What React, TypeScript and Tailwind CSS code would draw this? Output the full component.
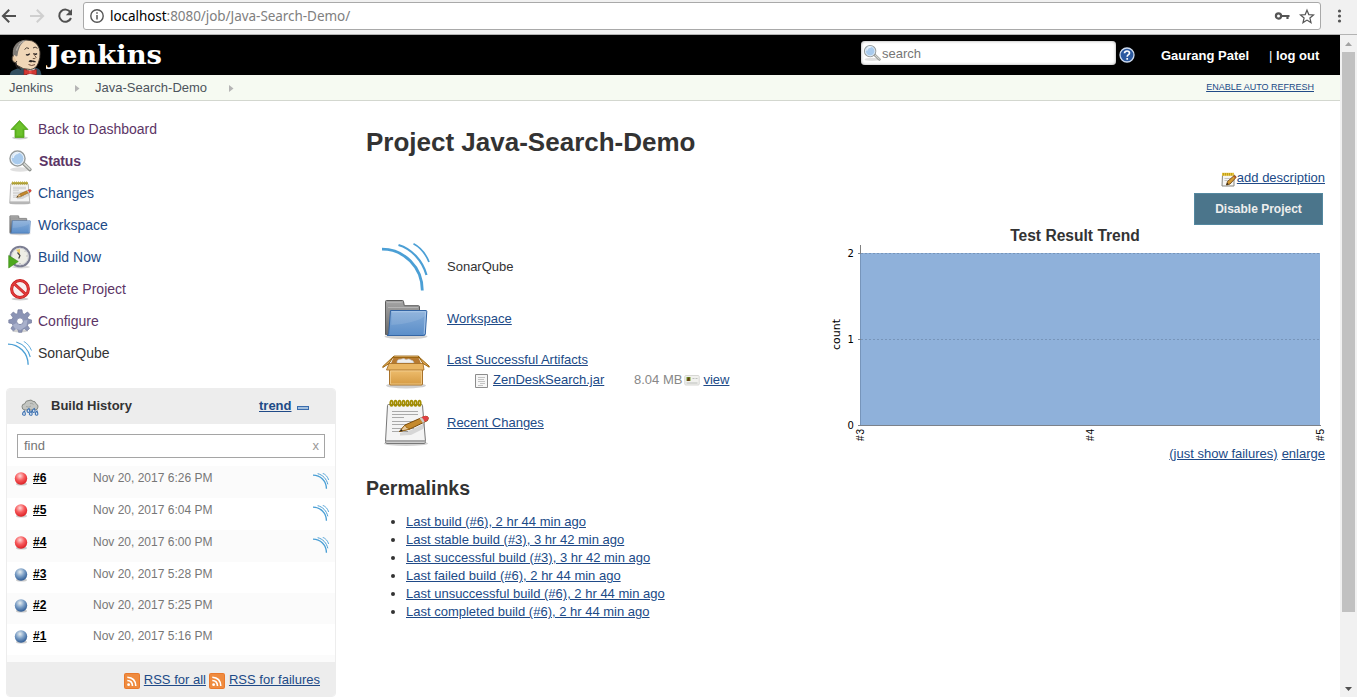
import React from 'react';

type IconProps = { className?: string };

const LINK = 'text-[#204a87] underline';

function SonarIcon({ className }: IconProps) {
  return (
    <svg className={className} viewBox="0 0 48 48" fill="none" stroke="#4b9fd5">
      <path d="M0 6.200C22 6.200 40.300 24 40.300 47.500" strokeWidth="2.800" />
      <path d="M16.500 2C29.500 5.800 40.500 17.500 44.500 32" strokeWidth="2.200" />
      <path d="M31.500 .8C38.500 4.500 44 11.500 47 19" strokeWidth="1.700" />
    </svg>
  );
}

function SmallSonarIcon({ className }: IconProps) {
  return (
    <svg className={className} viewBox="0 0 48 48" fill="none" stroke="#4b9fd5">
      <path d="M0 6.200C22 6.200 40.300 24 40.300 47.500" strokeWidth="4" />
      <path d="M14 2C29.500 5.800 40.500 17.500 44.500 34" strokeWidth="3" />
      <path d="M29 .8C38.500 4.500 44 11.500 47 21" strokeWidth="2.600" />
    </svg>
  );
}

function FolderIcon({ className }: IconProps) {
  return (
    <svg className={className} viewBox="0 0 48 48">
      <defs>
        <linearGradient id="folderFront" x1="0" y1="0" x2="0" y2="1">
          <stop offset="0" stopColor="#86add9" />
          <stop offset="1" stopColor="#5b8ec9" />
        </linearGradient>
        <linearGradient id="folderBack" x1="0" y1="0" x2="0" y2="1">
          <stop offset="0" stopColor="#a5a5a5" />
          <stop offset="1" stopColor="#6a6a6a" />
        </linearGradient>
      </defs>
      <ellipse cx="24" cy="41.500" rx="21.500" ry="2.800" fill="#000" opacity=".18" />
      <path d="M3.500 39.500V6.500q0-1 1-1h16q1 0 1 1l.8 4.200h14.200q1 0 1 1V38z" fill="url(#folderBack)" stroke="#5c5c5c" />
      <path d="M5 7.500h14.500M6 12.500h30" stroke="#b4b4b4" />
      <path d="M8.500 15.500H44q.8 0 .8 1l-1.500 22.500q-.3 1.500-1.500 1.500H5q1.500-.5 1.700-2z" fill="url(#folderFront)" stroke="#3465a4" />
      <path d="M9.500 16.700h34L42.200 39" fill="none" stroke="#b5cfed" strokeWidth=".8" />
      <path d="M9.300 30C24 29 37 26 43 21l.5-4H9.800z" fill="#fff" opacity=".1" />
    </svg>
  );
}

function NotepadIcon({ className }: IconProps) {
  return (
    <svg className={className} viewBox="0 0 48 48">
      <ellipse cx="24" cy="44.500" rx="22" ry="2.500" fill="#000" opacity=".18" />
      <path d="M6.500 5.500h33q1 0 1 1l3 36q0 2-1.500 2H5q-1.700 0-1.500-2l2-36q0-1 1-1z" fill="#f4f4f4" stroke="#777" />
      <path d="M4 41h39.300v2.500H3.800z" fill="#a8a8a8" />
      <g stroke="#aaa" strokeWidth="1">
        <path d="M10 12.500h26M10 15.500h26M10 18.500h12M10 22.500h26M10 25.500h26M10 29.500h22M10 32.500h16" />
      </g>
      <g fill="none" stroke="#a38d00" strokeWidth="1.800">
        <ellipse cx="9.500" cy="4.300" rx="1.200" ry="2.600" /><ellipse cx="13.500" cy="4.300" rx="1.200" ry="2.600" />
        <ellipse cx="17.500" cy="4.300" rx="1.200" ry="2.600" /><ellipse cx="21.500" cy="4.300" rx="1.200" ry="2.600" />
        <ellipse cx="25.500" cy="4.300" rx="1.200" ry="2.600" /><ellipse cx="29.500" cy="4.300" rx="1.200" ry="2.600" />
        <ellipse cx="33.500" cy="4.300" rx="1.200" ry="2.600" /><ellipse cx="37.500" cy="4.300" rx="1.200" ry="2.600" />
      </g>
      <path d="M18 34l11-3 14-7-2 6-12 6-11 .500z" fill="#000" opacity=".12" />
      <path d="M17.500 32.500l5.500-6.500 18-8q3-1.300 4.500-.3t0 3.900L28 30z" fill="#c58a2e" stroke="#7a4b0c" />
      <path d="M17.500 32.500l5.500-6.500 1.500 2.500 3.500 1.500z" fill="#e9c99a" stroke="#8f5902" strokeWidth=".7" />
      <path d="M39.500 18.300q3.500-2.100 6-.8t-.4 4l-2.500 1.500q-.6-2.700-3.100-4.700z" fill="#e04045" />
      <path d="M37.500 19.100l2-.8q2.500 2 3.100 4.700l-1.700 1z" fill="#ccc" />
      <path d="M17.500 32.500l1.800-2.300 1.500 1.500z" fill="#222" />
    </svg>
  );
}

function PackageIcon({ className }: IconProps) {
  return (
    <svg className={className} viewBox="0 0 48 48">
      <defs>
        <linearGradient id="boxFront" x1="0" y1="0" x2="0" y2="1">
          <stop offset="0" stopColor="#efbe6e" />
          <stop offset="1" stopColor="#d59a42" />
        </linearGradient>
      </defs>
      <ellipse cx="24" cy="38.500" rx="20" ry="3" fill="#000" opacity=".18" />
      <path d="M12 9.500h24l4 9H8z" fill="#b77a31" />
      <path d="M15 16q-.5-4 4-3.800 3-1.500 5 .5 3-1.700 5 .3 2.500.2 3 3z" fill="#efefef" stroke="#bbb" strokeWidth=".6" />
      <path d="M12 9h24.500l.8 1.500H11.200z" fill="#efc47e" stroke="#8f5902" strokeWidth=".8" />
      <path d="M7.500 22.500h33v14.500q0 1-1 1h-31q-1 0-1-1z" fill="url(#boxFront)" stroke="#a8722a" />
      <path d="M7 16.500h34l1 6.500H4.500z" fill="#e9b562" stroke="#a8722a" strokeWidth=".9" />
      <path d="M11.500 9.500L7 16.500.8 20.500q-.5-.5 0-1z" fill="#e5ac57" stroke="#8f5902" strokeWidth=".9" />
      <path d="M36.500 9.500L41 16.500l6.200 3.700q.3-.6-.2-1.200z" fill="#e5ac57" stroke="#8f5902" strokeWidth=".9" />
      <path d="M8.500 24h31v13h-31z" fill="none" stroke="#f3cf92" strokeWidth=".8" />
    </svg>
  );
}

function UpArrowIcon({ className }: IconProps) {
  return (
    <svg className={className} viewBox="0 0 24 24">
      <ellipse cx="12" cy="20.800" rx="8" ry="1.600" fill="#000" opacity=".2" />
      <path d="M11.500 3.500L20 12.500h-4v8H7v-8H3z" fill="#5cb51d" stroke="#55a31f" strokeWidth=".8" />
      <path d="M11.500 5l6 6.700h-3v7H8.500v-7h-3z" fill="#8ddb4c" opacity=".35" />
    </svg>
  );
}

function SearchIcon({ className }: IconProps) {
  return (
    <svg className={className} viewBox="0 0 24 24">
      <ellipse cx="12" cy="20.500" rx="10" ry="2.200" fill="#000" opacity=".12" />
      <path d="M15.500 14.500l6.300 6" stroke="#8b8f8a" strokeWidth="3.600" strokeLinecap="round" />
      <path d="M15.800 14.500l6 5.700" stroke="#d2d4d1" strokeWidth="1.800" strokeLinecap="round" />
      <circle cx="9.500" cy="9.500" r="7.500" fill="#a9cbed" stroke="#989c9b" strokeWidth="1.500" />
      <circle cx="9.500" cy="9.500" r="6.300" fill="none" stroke="#eff5fb" strokeWidth="1" />
      <path d="M5 9q.5-4.500 5.500-4.800" stroke="#fff" strokeWidth="1.700" fill="none" opacity=".7" />
    </svg>
  );
}

function ClockIcon({ className }: IconProps) {
  return (
    <svg className={className} viewBox="0 0 24 24">
      <ellipse cx="13" cy="22" rx="9" ry="1.500" fill="#000" opacity=".15" />
      <circle cx="12" cy="11.500" r="9.800" fill="#eeeee6" stroke="#7c7e92" strokeWidth="2" />
      <circle cx="12" cy="11.500" r="8.300" fill="none" stroke="#c8c9d3" strokeWidth=".8" />
      <path d="M12 9.500L8 4.800 12 4z" fill="#ecc963" />
      <path d="M9.500 7.500l2.500 3-1.300 3" stroke="#444" strokeWidth="1.200" fill="none" />
      <path d="M18.500 11h1M12 18v1M17 6.500l.7-.7" stroke="#999" />
      <path d="M.7 10.500l9.600 6L.7 23z" fill="#4ea91e" stroke="#3d8c17" strokeWidth=".6" />
    </svg>
  );
}

function StopIcon({ className }: IconProps) {
  return (
    <svg className={className} viewBox="0 0 24 24">
      <ellipse cx="12" cy="22" rx="8.500" ry="1.400" fill="#000" opacity=".2" />
      <circle cx="12" cy="12" r="8.400" fill="#f8f0f0" stroke="#c01818" strokeWidth="3" />
      <path d="M6 6.500l12 11" stroke="#c01818" strokeWidth="3" />
      <circle cx="12" cy="12" r="8.400" fill="none" stroke="#e03a3a" strokeWidth="1.900" />
      <path d="M6.200 6.700l11.600 10.600" stroke="#e03a3a" strokeWidth="1.900" />
    </svg>
  );
}

function GearIcon({ className }: IconProps) {
  return (
    <svg className={className} viewBox="0 0 24 24">
      <ellipse cx="12" cy="22" rx="8" ry="1.400" fill="#000" opacity=".18" />
      <path
        d="M10 .8h4l.5 3.600 2 .8 3-2.200 2.300 2.500L19.500 8.500l.8 1.800 3.200.6v3l-3.200.7-.8 1.900 2 3-2.300 2.300-2.900-2-1.900.8-.6 2.700h-3.200l-.6-2.700-2-.8-2.700 2-2.400-2.300 2-3-.8-1.900-3.300-.7v-3l3.300-.6.8-1.800-2-3L5.300 3l2.700 2.200 1.600-.8z"
        fill="#8b94b5" stroke="#737b9c" strokeWidth=".7"
      />
      <path d="M4.500 16l8-4 7-1-1 6-6 4-5-1z" fill="#c3c8de" opacity=".55" />
      <circle cx="12" cy="12.200" r="3.400" fill="#fff" stroke="#8089ab" />
    </svg>
  );
}

function RainIcon({ className }: IconProps) {
  return (
    <svg className={className} viewBox="0 0 18 18">
      <path d="M4 11Q.8 10.800 1 7.500 1 5 3.700 4.800 4.500 1.300 8 1.500q2-1.300 4 .8 2.500-.3 3 2.500 2.300.7 2 3.200-.3 3-3 3z" fill="#c3c5c1" stroke="#7d807b" strokeWidth=".9" />
      <path d="M5 7.500q3 1.500 5-.5M9 4.500q2-.8 3.500 1" stroke="#9b9d99" strokeWidth=".8" fill="none" />
      <g fill="#e5eef8" stroke="#3c70b0" strokeWidth="1.100">
        <path d="M8 9.500q-2 1.200-2 2.700a1.400 1.400 0 0 0 2.700.2q.2-1-.7-2.900zM13.300 9.500q-2 1.200-2 2.700a1.400 1.400 0 0 0 2.700.2q.2-1-.7-2.900z" />
        <path d="M3.500 12q-2 1.500-2 3.200a1.500 1.500 0 0 0 2.800.2q.2-1.200-.8-3.400zM10.300 12.200q-2 1.500-2 3a1.500 1.500 0 0 0 2.800.2q.2-1.200-.8-3.200zM16 12q-1.800 1.500-1.800 3.200a1.400 1.400 0 0 0 2.600.2q.2-1.200-.8-3.400z" />
      </g>
    </svg>
  );
}

function RssIcon({ className }: IconProps) {
  return (
    <svg className={className} viewBox="0 0 16 16">
      <rect x="0" y="0" width="16" height="16" rx="2" fill="#e9792c" />
      <rect x="1" y="1" width="14" height="14" rx="1" fill="#ef8b3f" />
      <circle cx="4.600" cy="11.700" r="1.400" fill="#fff" />
      <path d="M3.300 7.500q5 0 5.200 5.500M3.300 4.300q8.200.4 8.500 8.700" fill="none" stroke="#fff" strokeWidth="1.600" />
    </svg>
  );
}

function Ball({ red, className }: IconProps & { red: boolean }) {
  const id = red ? 'ballRed' : 'ballBlue';
  return (
    <svg className={className} viewBox="0 0 16 16">
      <defs>
        <radialGradient id={id} cx=".42" cy=".3" r=".7">
          <stop offset="0" stopColor={red ? '#ffd9d9' : '#e8eef0'} />
          <stop offset=".5" stopColor={red ? '#f75c5e' : '#7c9fc6'} />
          <stop offset="1" stopColor={red ? '#dc2024' : '#2f5c95'} />
        </radialGradient>
      </defs>
      <ellipse cx="8.500" cy="13" rx="5.500" ry="1.500" fill="#000" opacity=".2" />
      <circle cx="8" cy="7.500" r="6.200" fill={`url(#${id})`} />
    </svg>
  );
}

function DocIcon({ className }: IconProps) {
  return (
    <svg className={className} viewBox="0 0 16 16">
      <path d="M1.500 1.500h12v13h-12z" fill="#f6f6f6" stroke="#8c8c8c" />
      <path d="M4 4.500h7M4 6.500h6M4 8.500h7M6 10.500h5M4 12.500h5" stroke="#c3c3c3" />
    </svg>
  );
}

function CardIcon({ className }: IconProps) {
  return (
    <svg className={className} viewBox="0 0 16 16">
      <rect x=".8" y="3.500" width="14.400" height="9.500" rx="1" fill="#f1f1ee" stroke="#d7d7d4" />
      <path d="M2.500 5h4v4h-4z" fill="#6f9b2a" />
      <path d="M3.800 5.500h1.800V9H3z" fill="#6b3d16" />
      <path d="M8.500 6.500h2M11.500 6.500h2M2.500 11h11" stroke="#b6b9b4" strokeWidth=".9" />
    </svg>
  );
}

function EditIcon({ className }: IconProps) {
  return (
    <svg className={className} viewBox="0 0 16 16">
      <path d="M1.500 2.500h11.500v11.500h-12z" fill="#f4f4f2" stroke="#85857f" />
      <path d="M1 .8h12v3H1z" fill="#e5c23c" />
      <path d="M2.500 1v2.500M4.500 1v2.500M6.500 1v2.500M8.500 1v2.500M10.500 1v2.500" stroke="#b08f10" strokeWidth=".7" />
      <path d="M3.500 6.500h6M3.500 8.500h4" stroke="#c4c4c4" />
      <path d="M5.500 13l1-3.500L13 3.700q2-.3 2 1.800L9 12z" fill="#d69b34" stroke="#704812" strokeWidth=".9" />
      <path d="M5.500 13l.5-2 1.500 1z" fill="#111" />
      <path d="M12.500 4q2.300-.8 2.500 1.500l-1 1z" fill="#b5552c" />
    </svg>
  );
}

function Butler({ className }: IconProps) {
  return (
    <svg className={className} viewBox="0 0 34 36">
      <path d="M.8 36q.4-4 4-5l6-2.500h14.500q5 .5 6.200 3.500l1 4z" fill="#335061" />
      <path d="M18 29h7.500l1 7H18z" fill="#f4f4f4" />
      <path d="M7.500 26Q3.500 21 4 15.500 3.500 6.500 10 3q6-3.500 13-1.200 7 3 8 11 .6 6-1.700 11.200-2.500 6-7.800 6.500-7.500.5-14-4.500z" fill="#f0d6b7" stroke="#3b332d" strokeWidth=".9" />
      <path d="M4 17.500Q3 7 9.500 3q4-2.300 8-2-6 3.500-7.300 8.500l-1 3-.8 4.500-1.400.5-1.200-1.500-1.300.5z" fill="#7f7b76" />
      <path d="M9.500 6.500q2-3 5.500-4.500M7.500 11.500q.8-3 2-4.500" stroke="#b9b4ad" strokeWidth="1.200" fill="none" />
      <path d="M4.500 17q-2 .3-1.300 3.500.8 3.500 3.300 3 1 0 1.300-1.500" fill="#e6c6a0" stroke="#3b332d" strokeWidth=".9" />
      <path d="M7 23.500q-.5 3.500 1.500 5l3.500 2" stroke="#231f20" fill="none" strokeWidth="1.200" />
      <path d="M15.500 10.500q2-3 4.500-1M24 9q2-2 4.500.3" stroke="#4a3c32" strokeWidth="1" fill="none" />
      <path d="M17 15.500q2 1.300 3.700-.8M24.500 14.500q2 1.500 3.500 0" stroke="#231f20" strokeWidth="1.300" fill="none" />
      <path d="M24.500 14q1 3 2.700 4.300-.8 2-3.400 1.200" stroke="#6e5441" strokeWidth="1" fill="none" />
      <path d="M19.500 22.500q1.800-2.300 4-1 2.500-.5 3.700 1.500-2 .8-3.700-.3-2 1.300-4-.2z" fill="#2b2523" />
      <path d="M19.500 25.500q3 2 6.500.1" stroke="#5d3a2c" fill="none" strokeWidth=".9" />
      <path d="M15 30.300l6 1.700 6.500-1.500v5.300l-6.500-1.300-6 1.700z" fill="#d33833" stroke="#8d201c" strokeWidth=".6" />
      <circle cx="21.300" cy="33" r="1.500" fill="#ef4a43" />
    </svg>
  );
}

function BrowserBar() {
  return (
    <div className="flex h-[35px] shrink-0 items-start border-b border-[#b3b3b3] bg-[#f1f1f1]">
      <svg className="mt-[7px] h-[18px] w-[83px] shrink-0" viewBox="0 0 83 18" fill="none" strokeWidth="2">
        <path d="M16 9H3M9.200 2.700L2.900 9l6.300 6.300" stroke="#505050" />
        <path d="M30 9h13M36.800 2.700L43.100 9l-6.300 6.300" stroke="#cfcfcf" />
        <path d="M70.500 5.400A6.100 6.100 0 1 0 71 11" stroke="#505050" />
        <path d="M72 2v6.200h-6.200z" fill="#505050" />
      </svg>
      <div className="mt-[2px] flex h-[28px] w-[1238px] items-center rounded-[3px] border border-[#a9a9a9] bg-white pl-[6px] pr-[5px]">
        <svg className="h-[14px] w-[14px]" viewBox="0 0 14 14" fill="none" stroke="#555">
          <circle cx="7" cy="7" r="6.200" strokeWidth="1.400" />
          <path d="M7 6v4.500M7 3.300v1.500" strokeWidth="1.500" />
        </svg>
        <div className="ml-[6px] flex-1 font-['Noto_Sans',sans-serif] text-[13.500px] leading-[20px] tracking-[-0.050px] text-[#808080]">
          <span className="text-black">localhost</span>:8080/job/Java-Search-Demo/
        </div>
        <svg className="h-[16px] w-[41px]" viewBox="0 0 41 16" fill="none" stroke="#555">
          <circle cx="4.500" cy="8" r="2.600" strokeWidth="2.200" />
          <path d="M7.500 8h8M13.500 8v3" strokeWidth="2.200" />
          <path d="M33 2.200l1.800 4.400 4.700.4-3.600 3 1.100 4.600-4-2.500-4 2.500 1.100-4.600-3.600-3 4.700-.4z" strokeWidth="1.200" />
        </svg>
      </div>
      <svg className="ml-[16px] mt-[8px] h-[16px] w-[6px]" viewBox="0 0 6 16" fill="#555">
        <circle cx="2.500" cy="3" r="1.600" /><circle cx="2.500" cy="8" r="1.600" /><circle cx="2.500" cy="13" r="1.600" />
      </svg>
    </div>
  );
}

function Header() {
  return (
    <header className="flex h-[40px] items-start bg-black">
      <Butler className="ml-[9px] mt-[4px] h-[36px] w-[34px]" />
      <svg className="ml-[3px] h-[40px] w-[120px]" viewBox="0 0 120 40">
        <text x="1" y="28.500" textLength="115" lengthAdjust="spacingAndGlyphs" fill="#fff" className="font-['DejaVu_Serif_Condensed','DejaVu_Serif',serif] text-[26px] font-bold">Jenkins</text>
      </svg>
      <div className="ml-[695px] mt-[6px] flex h-[24px] w-[255px] items-center rounded-[4px] bg-white pl-[2px] shadow-[inset_0_0_3px_#999]">
        <SearchIcon className="h-[18px] w-[18px]" />
        <span className="ml-[1px] mt-[2px] text-[13px] text-[#757575]">search</span>
      </div>
      <svg className="ml-[3px] mt-[12px] h-[16px] w-[16px]" viewBox="0 0 16 16">
        <circle cx="8" cy="8" r="7" fill="#2b59a0" stroke="#cfdcf0" strokeWidth="1.300" />
        <path d="M5.500 6.300Q5.700 4 8 4t2.500 2q0 1.300-1.500 2.100-.8.500-.8 1.600M8.200 11v1.800" fill="none" stroke="#fff" strokeWidth="1.700" />
      </svg>
      <div className="ml-[26px] mt-[11px] flex text-[13px] font-bold leading-[20px] text-white">
        <span className="w-[108px] whitespace-nowrap">Gaurang Patel</span>
        <span className="whitespace-nowrap"><span className="font-normal">|</span> log out</span>
      </div>
    </header>
  );
}

function Crumb({ children }: { children: React.ReactNode }) {
  return (
    <>
      <span>{children}</span>
      <svg className="ml-[22px] mr-[15px] mt-[1px] h-[7px] w-[5px]" viewBox="0 0 5 7"><path d="M0 0l4.500 3.500L0 7z" fill="#b5b5b5" /></svg>
    </>
  );
}

const TASKS = [
  { label: 'Back to Dashboard', Icon: UpArrowIcon, color: 'text-[#5c3566]' },
  { label: 'Status', Icon: SearchIcon, color: 'pl-[1px] font-bold tracking-[-0.15px] text-[#5c3566]' },
  { label: 'Changes', Icon: NotepadIcon, color: 'text-[#204a87]' },
  { label: 'Workspace', Icon: FolderIcon, color: 'text-[#204a87]' },
  { label: 'Build Now', Icon: ClockIcon, color: 'text-[#204a87]' },
  { label: 'Delete Project', Icon: StopIcon, color: 'text-[#5c3566]' },
  { label: 'Configure', Icon: GearIcon, color: 'text-[#5c3566]' },
  { label: 'SonarQube', Icon: SonarIcon, color: 'text-[#333]' },
];

const BUILDS = [
  { id: '#6', time: 'Nov 20, 2017 6:26 PM', red: true, row: 'h-[32px] bg-[#fbfbfb]' },
  { id: '#5', time: 'Nov 20, 2017 6:04 PM', red: true, row: 'h-[32px]' },
  { id: '#4', time: 'Nov 20, 2017 6:00 PM', red: true, row: 'h-[32px] bg-[#fbfbfb]' },
  { id: '#3', time: 'Nov 20, 2017 5:28 PM', red: false, row: 'h-[31px]' },
  { id: '#2', time: 'Nov 20, 2017 5:25 PM', red: false, row: 'h-[31px] bg-[#fbfbfb]' },
  { id: '#1', time: 'Nov 20, 2017 5:16 PM', red: false, row: 'h-[31px]' },
];

function Sidebar() {
  return (
    <aside className="w-[336px] shrink-0 pt-[12px]">
      <nav>
        {TASKS.map(({ label, Icon, color }) => (
          <div key={label} className="flex h-[32px] items-center pl-[8px]">
            <Icon className="h-[24px] w-[24px]" />
            <span className={`ml-[6px] text-[14px] ${color}`}>{label}</span>
          </div>
        ))}
      </nav>
      <section className="ml-[6px] mt-[19px] h-[309px] overflow-hidden rounded-[4px] border border-[#ededed] bg-white">
        <div className="flex h-[35px] items-center bg-[#ededed] pl-[14px] text-[13px] font-bold">
          <RainIcon className="mt-[2px] h-[18px] w-[18px]" />
          <span className="-mt-[2px] ml-[12px] w-[208px] text-[#333]">Build History</span>
          <span className={`-mt-[2px] ${LINK}`}>trend</span>
          <svg className="ml-[5px] mt-[2px] h-[4px] w-[12px]" viewBox="0 0 12 4"><rect x=".5" y=".5" width="11" height="3" fill="#a3bfdd" stroke="#3a6cad" /></svg>
        </div>
        <div className="mx-[10px] mb-[8px] mt-[10px] flex h-[24px] items-center justify-between border border-[#a5a5a5] pl-[6px] pr-[5px] text-[13px] text-[#757575]">
          <span>find</span><span className="text-[#999]">x</span>
        </div>
        {BUILDS.map((b) => (
          <div key={b.id} className={`flex items-start ${b.row}`}>
            <Ball red={b.red} className="ml-[6px] mt-[5px] h-[16px] w-[16px]" />
            <span className="ml-[4px] mt-[3px] w-[60px] text-[12px] font-bold leading-[18px] text-black underline">{b.id}</span>
            <span className="mt-[3px] w-[220px] text-[12px] leading-[18px] text-[#777]">{b.time}</span>
            {b.red && <SmallSonarIcon className="mt-[7px] h-[16px] w-[16px]" />}
          </div>
        ))}
        <div className="h-[7px] bg-[#fbfbfb]" />
        <div className="flex h-[35px] items-center justify-end bg-[#ededed] pr-[15px] text-[13px]">
          <RssIcon className="mt-[3px] h-[16px] w-[16px]" />
          <span className={`ml-[4px] ${LINK}`}>RSS for all</span>
          <RssIcon className="ml-[3px] mt-[3px] h-[16px] w-[16px]" />
          <span className={`ml-[4px] ${LINK}`}>RSS for failures</span>
        </div>
      </section>
    </aside>
  );
}

function TrendChart() {
  return (
    <svg className="h-[202px] w-[500px]" viewBox="825 244 500 202">
      <rect x="861" y="253" width="459" height="172" fill="#8fb1da" />
      <path d="M861 253.500h459M861 339.500h459" stroke="#7795ba" strokeDasharray="2 2" />
      <path d="M860.500 245v8" stroke="#808080" />
      <path d="M860.500 253v172" stroke="#7795ba" />
      <path d="M858 425.500h463M858 339.500h3M858 253.500h3" stroke="#7c828a" />
      <g className="font-['DejaVu_Sans',sans-serif] text-[10px]" fill="#000">
        <text x="847.500" y="257">2</text>
        <text x="847.500" y="343">1</text>
        <text x="847.500" y="429">0</text>
        <text transform="translate(840 350) rotate(-90)" className="text-[11px]" textLength="31">count</text>
        <text transform="translate(864 441) rotate(-90)" textLength="12" className="font-['Liberation_Sans',sans-serif]">#3</text>
        <text transform="translate(1094 441) rotate(-90)" textLength="12" className="font-['Liberation_Sans',sans-serif]">#4</text>
        <text transform="translate(1324 441) rotate(-90)" textLength="12" className="font-['Liberation_Sans',sans-serif]">#5</text>
      </g>
    </svg>
  );
}

const PERMALINKS = [
  'Last build (#6), 2 hr 44 min ago',
  'Last stable build (#3), 3 hr 42 min ago',
  'Last successful build (#3), 3 hr 42 min ago',
  'Last failed build (#6), 2 hr 44 min ago',
  'Last unsuccessful build (#6), 2 hr 44 min ago',
  'Last completed build (#6), 2 hr 44 min ago',
];

function MainPanel() {
  return (
    <main className="ml-[30px] w-[959px] text-[13px] leading-[18px] text-[#333]">
      <h1 className="mt-[25px] text-[26px] font-bold leading-[32px]">Project Java-Search-Demo</h1>
      <div className="mt-[10px] flex h-[20px] items-center justify-end">
        <EditIcon className="mt-[3px] h-[16px] w-[16px]" />
        <span className={LINK}>add description</span>
      </div>
      <div className="mt-[5px] flex justify-end pr-[2px]">
        <button className="h-[32px] w-[129px] border border-[#5488a0] bg-[#4b758b] text-[12px] font-bold text-[#eee]">Disable Project</button>
      </div>
      <div className="flex h-[253px]">
        <div className="w-[459px] pt-[16px]">
          <div className="flex h-[52px] items-center pl-[16px]">
            <SonarIcon className="h-[48px] w-[48px]" />
            <span className="ml-[17px]">SonarQube</span>
          </div>
          <div className="flex h-[52px] items-center pl-[16px]">
            <FolderIcon className="h-[48px] w-[48px]" />
            <span className={`ml-[17px] ${LINK}`}>Workspace</span>
          </div>
          <div className="flex h-[52px] items-center pl-[16px]">
            <PackageIcon className="h-[48px] w-[48px]" />
            <div className="ml-[17px] h-[40px]">
              <div className={LINK}>Last Successful Artifacts</div>
              <div className="mt-[2px] flex items-center pl-[27px]">
                <DocIcon className="mt-[1px] h-[16px] w-[16px]" />
                <span className="ml-[3px] w-[141px]"><span className={LINK}>ZenDeskSearch.jar</span></span>
                <span className="whitespace-nowrap text-[#888]">8.04 MB</span>
                <CardIcon className="ml-[2px] h-[16px] w-[16px]" />
                <span className={`ml-[3px] ${LINK}`}>view</span>
              </div>
            </div>
          </div>
          <div className="flex h-[52px] items-center pl-[16px]">
            <NotepadIcon className="h-[48px] w-[48px]" />
            <span className={`ml-[17px] ${LINK}`}>Recent Changes</span>
          </div>
        </div>
        <div className="w-[500px]">
          <div className="h-[19px] text-center text-[15.600px] font-bold leading-[21px]">Test Result Trend</div>
          <TrendChart />
          <div className="flex justify-end gap-[4px] leading-[16px]">
            <span className={LINK}>(just show failures)</span><span className={LINK}>enlarge</span>
          </div>
        </div>
      </div>
      <h2 className="text-[19.500px] font-bold leading-[20px]">Permalinks</h2>
      <ul className="mt-[15px] list-disc pl-[40px]">
        {PERMALINKS.map((p) => (
          <li key={p}><span className={LINK}>{p}</span></li>
        ))}
      </ul>
    </main>
  );
}

export default function App() {
  return (
    <div className="flex h-[697px] w-[1357px] flex-col overflow-hidden bg-white font-['Liberation_Sans',Arial,sans-serif]">
      <BrowserBar />
      <div className="flex h-[662px]">
        <div className="w-[1340px] shrink-0">
          <Header />
          <div className="flex h-[26px] items-center border-b border-[#d3d7cf] bg-[#f6faf2] pl-[9px] pr-[26px] text-[13px] text-[#4d545d]">
            <Crumb>Jenkins</Crumb>
            <Crumb>Java-Search-Demo</Crumb>
            <span className="ml-auto mt-[1px] text-[9px] text-[#204a87] underline">ENABLE AUTO REFRESH</span>
          </div>
          <div className="flex">
            <Sidebar />
            <MainPanel />
          </div>
        </div>
        <div className="flex w-[17px] flex-col items-center bg-[#f1f1f1]">
          <svg className="h-[17px] w-[17px]" viewBox="0 0 17 17"><path d="M5 11h7L8.500 7z" fill="#a3a3a3" /></svg>
          <div className="h-[560px] w-[13px] bg-[#c1c1c1]" />
          <svg className="mt-auto h-[17px] w-[17px]" viewBox="0 0 17 17"><path d="M5 7h7L8.500 11z" fill="#505050" /></svg>
        </div>
      </div>
    </div>
  );
}
